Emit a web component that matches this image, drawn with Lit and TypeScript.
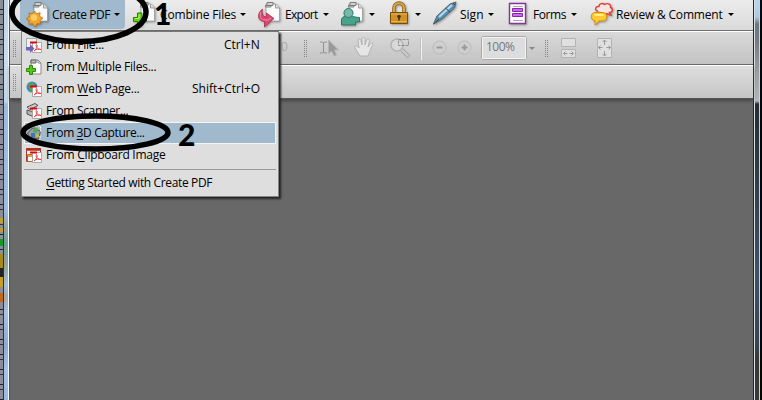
import { LitElement, html, css, svg, nothing } from 'lit';
import { customElement, property } from 'lit/decorators.js';

const page = svg`
  <path d="M8 4h9.500l4 4v13H8z" fill="#fafafa" stroke="#9a9a9a" stroke-width=".8"/>
  <path d="M17.500 4v4h4" fill="#ddd" stroke="#888" stroke-width=".8"/>
  <path d="M7.500 5.500V7H13V5.500zM9 2.500h6v3H9z" fill="#d0d0d0" stroke="#777" stroke-width=".9"/>`;

const icons: Record<string, unknown> = {
  create: svg`${page}<path d="M8.500 11l2.200 2.800 3.400-1-.5 3.500 3.400 2-3.100 2.100.8 3.600-3.600-.5-2.300 3.200-2.400-3.100-3.600.8.6-3.700L.3 18.500l3.200-2L3 13l3.400.9z" fill="#f4a52c" stroke="#b97110" stroke-width=".8"/><circle cx="8" cy="17.500" r="3.200" fill="#ffcb62"/>`,
  combine: svg`${page}<path d="M4.500 13h4.500v4.500h4.500v4H9V26H4.500v-4.500H.5v-4h4z" fill="#67d50f" stroke="#278000"/><path d="M6 14.500v4H2" fill="none" stroke="#b4f56b"/>`,
  export: svg`${page}<path d="M4.500 9c-6 5-5 12 2 12.500v5.500L16 18.500 8.500 13v4c-4 0-5-4-4-8z" fill="#dc4770" stroke="#a92850" stroke-width=".8"/><path d="M3 12c-2 5 0 8 4 8h3l3-2" fill="none" stroke="#f08fac"/>`,
  meeting: svg`${page}<path d="M.5 25v-5c0-2.500 2-3.500 4-3.500h7c2 0 3 1 7 1V22h-4v3z" fill="#4ba18c" stroke="#267866"/><circle cx="7.500" cy="13" r="4.500" fill="#76b9a9" stroke="#267866"/>`,
  secure: svg`<path d="M7 12V8c0-6.500 10-6.500 10 0v4" fill="none" stroke="#8a6425" stroke-width="3.600"/><path d="M7 12V8c0-6.500 10-6.500 10 0v4" fill="none" stroke="#d9a53f" stroke-width="2"/><path d="M3.500 12.500h17v11h-17z" fill="#cf9024" stroke="#7b4c09"/><path d="M4 14h16M4 21.500h16" stroke="#e6b34d"/><circle cx="12" cy="16.500" r="1.800" fill="#473313"/><path d="M12 16.500v4" stroke="#473313" stroke-width="1.600"/>`,
  sign: svg`<path d="M.5 24l3.500-8L17 4l6-2-1.500 6L9 19z" fill="#528fb7" stroke="#56636d"/><path d="M6 17L19 5" stroke="#b6dbef" stroke-width="2"/><path d="M12.500 8l4.500 4M.5 24l5.500-5M20 3l2 2" stroke="#444"/>`,
  forms: svg`<path d="M3.500 3.500h16v20h-16z" fill="#fff" stroke="#85349b" stroke-width="1.400"/><path d="M7 6.500h10M7 20.500h10" stroke="#aaa"/><path d="M6.500 8.500h10v3h-10zM6.500 13.500h10v3h-10z" fill="#c76bea" stroke="#8b24af"/>`,
  review: svg`<path d="M8 11c-4-1-2.500-5 1-4.500C9 3 13 3 14.500 4.500c3-2 7 0 6 3 3 1 2 5-1 5l1.500 2.500-5-1.500" fill="#f7e6e3" stroke="#df4037" stroke-width="1.400"/><path d="M5 12.500h8c5 0 5 8.500 0 8.500H9l-4 4v-4.200c-5-.8-5-7.500 0-8.300z" fill="#ffc832" stroke="#d88a0c"/><path d="M4.500 15h9" stroke="#ffef82" stroke-width="2"/>`,
};

const sheet = svg`<path d="M5 1h7l3 3v11H5z" fill="#fff" stroke="#888"/><path d="M12 1v3h3" fill="none" stroke="#888"/>`;
const pdf = svg`
  <path d="M6.500 5.500h9v10h-9z" fill="#fff" stroke="#999" stroke-width=".8"/>
  <path d="M4 5.500h7" stroke="#d00d0d" stroke-width="2"/>
  <path d="M8 14c3-2.500 4-5.500 2.500-6.500-1.500 1 1 5.500 4.500 5-2-1-5-.5-7 1.500" fill="none" stroke="#e33737" stroke-width=".9"/>`;

const smallIcons: Record<string, unknown> = {
  file: svg`<path d="M.5 1.500h10v12H.5z" fill="#eef0f8" stroke="#9aa"/>${pdf}<path d="M0 10h4V7l4.500 4.500L4 16v-3H0z" fill="#7561b5"/>`,
  multiple: svg`${sheet}<path d="M5 1h5v3H5z" fill="#bbb" stroke="#666"/><path d="M3.500 6.500h3v3h3v3h-3v3h-3v-3h-3v-3h3z" fill="#4bca16" stroke="#278000" stroke-width=".9"/>`,
  web: svg`<circle cx="6" cy="6" r="5.500" fill="#3b89c9"/><path d="M2 3l4-2 3 3-3 2 1 3-3 2z" fill="#52a548"/>${pdf}`,
  scanner: svg`<path d="M1 4l8-3.500 3 2-8 4z" fill="#ccc" stroke="#555"/><path d="M1 7l7 2v5L1 11z" fill="#b5b5b5" stroke="#555"/>${pdf}`,
  capture: svg`<path d="M1.500 8l5-5 8 3-2 8-9-2z" fill="#9a9fa3" stroke="#555"/><path d="M8 2l4 1-1 5-4-1z" fill="#53a957"/><path d="M5 8h4v4H5z" fill="#3878c0"/><path d="M10 9h3v3h-3z" fill="#c8b53c"/><path d="M9 1h5.500v6M4 15h10v-4" fill="none" stroke="#fff" stroke-dasharray="2 1"/>`,
  clipboard: svg`<path d="M.5 1.500h14v13H.5z" fill="#fff" stroke="#a33b2d"/><path d="M.5 2.500h14" stroke="#b82a20" stroke-width="2.500"/><path d="M1.500 7.500h5v7h-5z" fill="#fff" stroke="#b06a18"/><path d="M2 9h4" stroke="#e6a43b" stroke-width="2"/>${pdf}`,
};

interface ToolItem {
  icon: string;
  label?: string;
  iconX: number;
  textX?: number;
  textWidth?: number;
  arrowX: number;
}

const tools: ToolItem[] = [
  { icon: 'create', label: 'Create PDF', iconX: 26, textX: 52, textWidth: 58, arrowX: 114 },
  { icon: 'combine', label: 'Combine Files', iconX: 133, textX: 160, textWidth: 76, arrowX: 240 },
  { icon: 'export', label: 'Export', iconX: 258, textX: 285, textWidth: 33, arrowX: 323 },
  { icon: 'meeting', iconX: 341, arrowX: 369 },
  { icon: 'secure', iconX: 387, arrowX: 415 },
  { icon: 'sign', label: 'Sign', iconX: 433, textX: 460, textWidth: 23, arrowX: 488 },
  { icon: 'forms', label: 'Forms', iconX: 506, textX: 533, textWidth: 33, arrowX: 571 },
  { icon: 'review', label: 'Review & Comment', iconX: 590, textX: 616, textWidth: 107, arrowX: 728 },
];

// underlined mnemonic sits between the two halves of the label
const menuItems = [
  { icon: 'file', label: ['From ', 'F', 'ile...'], width: 58, shortcut: 'Ctrl+N', shortcutWidth: 36 },
  { icon: 'multiple', label: ['From ', 'M', 'ultiple Files...'], width: 110 },
  { icon: 'web', label: ['From ', 'W', 'eb Page...'], width: 93, shortcut: 'Shift+Ctrl+O', shortcutWidth: 68 },
  { icon: 'scanner', label: ['From ', 'S', 'canner...'], width: 82 },
  { icon: 'capture', label: ['From ', '3', 'D Capture...'], width: 99, active: true },
  { icon: 'clipboard', label: ['From ', 'C', 'lipboard Image'], width: 119 },
];

/** Text run whose letter spacing is adjusted to fill a given width. */
@customElement('fit-text')
export class FitText extends LitElement {
  static styles = css`
    :host { display: inline-block; white-space: pre; }
    .run { display: inline-block; }
    u { text-decoration-thickness: 1px; text-underline-offset: 2px; }
  `;

  @property({ attribute: false }) parts: string[] = [];
  @property({ type: Number }) width = 0;

  updated() {
    const run = this.renderRoot.querySelector<HTMLElement>('.run')!;
    this.style.width = `${this.width}px`;
    run.style.letterSpacing = '0px';
    const count = this.parts.join('').length;
    const natural = run.offsetWidth;
    run.style.letterSpacing = `${(this.width - natural) / count}px`;
  }

  render() {
    const [before, key = '', after = ''] = this.parts;
    return html`<span class="run">${before}${key ? html`<u>${key}</u>` : nothing}${after}</span>`;
  }
}

@customElement('app-root')
export class AppRoot extends LitElement {
  static styles = css`
    * { box-sizing: border-box; }
    :host {
      position: relative;
      display: flex;
      width: 762px;
      height: 400px;
      overflow: hidden;
      background: #686868;
      color: #000;
      font: 12px/16px 'Open Sans', 'Noto Sans', sans-serif;
    }
    svg { display: block; overflow: visible; }

    .left { display: flex; width: 10px; flex: none; }
    .desktop {
      width: 3px;
      background:
        linear-gradient(transparent 218px, #c79d22 218px 223px, transparent 223px 228px, #c79d22 228px 232px, transparent 232px 239px, #179a22 239px 246px, transparent 246px 254px, #a88a1b 254px 268px, #222 268px 277px, #c8a021 277px 287px, transparent 287px 293px, #c2681a 293px 302px, transparent 302px),
        repeating-linear-gradient(#8b8d98 0 9px, #202329 9px 10px, #8d909c 10px 14px, #30333b 14px 15px);
    }
    .glass {
      width: 6px;
      border-left: 1px solid #28323c;
      border-right: 1px solid #eff7ff;
      background: linear-gradient(#bfd3e6, #cbdcec 60px, #c0d5ea 101px, #9dbbdd 105px, #9dbde2 210px, #98a8a6 224px, #6e9f97 244px, #94a59c 266px, #a4bddb 285px, #a5a9aa 297px, #a6c2e5 312px, #8fabd0 345px, #a6c2e5 370px, #9db8da);
    }
    .edge { width: 1px; background: #4b5563; }
    .right { display: flex; width: 9px; flex: none; background: #050607; border-left: 1px solid #252525; }
    .right-glass {
      width: 6px;
      border-left: 1px solid #dce1e5;
      border-right: 1px solid #cbd2d7;
      background: linear-gradient(#b8d5ee, #acc9e2 17px, #6d7783 24px, #737a82 40px, #989da3 70px, #b3b7bd 101px, #252d36 104px, #34414f 200px, #41516b 270px, #384454 345px, #393734 360px, #3b3935);
    }

    .window { flex: 1; min-width: 0; }
    .bar { position: relative; display: flex; align-items: center; }
    .main { height: 31px; background: linear-gradient(#ececec, #dadada); border-bottom: 1px solid #6d6d6d; }
    .sub { height: 34px; background: linear-gradient(#d9d9d9, #c3c3c3); border-top: 1px solid #fff; border-bottom: 1px solid #6d6d6d; }
    .last { height: 34px; background: linear-gradient(#dedede, #c5c5c5); border-top: 1px solid #fff; border-bottom: 1px solid #555; box-shadow: 0 2px 3px #444; }
    .tools { display: grid; width: 744px; height: 30px; }
    .tool { grid-area: 1 / 1; display: flex; align-items: flex-start; justify-self: start; }
    .create { background: #a0b9cd; border-radius: 0 0 4px 4px; width: 105px; height: 29px; margin-left: 10px; grid-area: 1 / 1; }
    .tool-icon { width: 24px; height: 28px; filter: drop-shadow(1px 1px 1px #0005); }
    .tool fit-text { margin-top: 7px; }
    .arrow { width: 0; height: 0; margin-top: 13px; border: 3px solid transparent; border-top-color: #000; border-bottom: 0; }

    .menu { position: absolute; left: 21px; top: 31px; width: 258px; height: 166px; padding: 2px 2px 0; background: #dedede; border: 1px solid #858585; border-top-color: #777; box-shadow: 2px 2px 2px #222; }
    .menu-item { display: flex; align-items: center; height: 22px; padding-left: 1px; border: 1px solid transparent; }
    .menu-item.active { background: #a0b9cd; border-color: #f3f3f3; }
    .menu-icon { width: 16px; margin-right: 4px; }
    .shortcut { margin-left: auto; margin-right: 15px; }
    .rule { height: 1px; margin-top: 3px; background: #999; }
    .getting { padding: 5px 0 0 22px; }

    .callouts { position: absolute; inset: 0; }
    .number { position: absolute; font: 900 30px/24px Lato, 'Open Sans', sans-serif; }
    .one { left: 154px; top: 1px; }
    .two { left: 178px; top: 122px; }
  `;

  renderSubTools() {
    return html`
      <svg width="743" height="32" viewBox="10 32 743 32" fill="none" stroke="#aaa">
        <path d="M13.500 40v17M15.500 40v17M304.500 40v17M306.500 40v17M545.500 40v17M547.500 40v17" stroke="#858585" stroke-dasharray="1 1"/>
        <text x="281" y="51" font-size="12" fill="#aaa" stroke="none">0</text>
        <path d="M320 42h2.500l1 1 1-1h2.500M323.500 43v9M320 53h2.500l1-1 1 1h2.500" stroke="#8f8f8f"/>
        <path d="M328.500 40v14l3-3 2.500 5 2.500-1-2-5h4z" fill="#999" stroke="#b5b5b5"/>
        <path d="M360 56l-5-8c-1-3 2-3 4 0l-1-7c0-3 3-2 3 0l1 4v-6c0-2 3-2 3 0v6l1.500-5c1-2 3-1 3 1l-1.500 6 2-3c2-2 4 0 2 2l-4 10z" fill="#e6e6e6" stroke="#b3b3b3"/>
        <circle cx="397" cy="45" r="6" fill="#d9d9d9" stroke="#b3b3b3" stroke-width="1.500"/>
        <path d="M402 50l7 7" stroke="#a8a8a8" stroke-width="4"/><path d="M402 50l6.500 6.500" stroke="#ccc" stroke-width="2"/>
        <path d="M398.500 39.500h10v6h-10z" stroke="#8c8c8c" stroke-dasharray="3 1"/>
        <path d="M421.500 38v22" stroke="#f2f2f2"/><path d="M420.500 38v22" stroke="#c0c0c0"/>
        <circle cx="439.500" cy="47.500" r="6.500" fill="#cfcfcf" stroke="#bcbcbc"/><path d="M436.500 47.500h6" stroke="#9a9a9a" stroke-width="2"/>
        <circle cx="464.500" cy="47.500" r="6.500" fill="#cfcfcf" stroke="#bcbcbc"/><path d="M461.500 47.500h6M464.500 44.500v6" stroke="#9a9a9a" stroke-width="2"/>
        <rect x="482" y="37" width="44" height="22" rx="1" fill="#ddd" stroke="#f2f2f2" stroke-width="2"/><rect x="481.500" y="36.500" width="45" height="23" rx="1"/>
        <text x="486" y="51" font-size="12" fill="#777" stroke="none" textLength="29">100%</text>
        <path d="M529 47h6l-3 3z" fill="#888" stroke="none"/>
        <path d="M561.500 38.500h14v8h-14zM561.500 49.500h14v8h-14z" fill="#e0e0e0" stroke="#b3b3b3"/><path d="M563.500 53.500h4M569.500 53.500h4M565.500 51.500l-2 2 2 2M571.500 51.500l2 2-2 2" stroke="#999"/>
        <path d="M597.500 38.500h14v19h-14z" fill="#e0e0e0" stroke="#b3b3b3"/><path d="M604.500 40v5M602.500 42l2-2 2 2M604.500 51v5M602.500 54l2 2 2-2M598.500 47.500h4M600.500 45.500l-2 2 2 2M606.500 47.500h4M608.500 45.500l2 2-2 2" stroke="#999"/>
      </svg>`;
  }

  render() {
    return html`
      <div class="left"><div class="desktop"></div><div class="glass"></div><div class="edge"></div></div>
      <main class="window">
        <div class="bar main">
          <div class="tools">
            <div class="create"></div>
            ${tools.map((t) => html`
              <div class="tool" style="margin-left: ${t.iconX - 10}px">
                <svg class="tool-icon" viewBox="0 0 24 28">${icons[t.icon]}</svg>
                ${t.label ? html`<fit-text style="margin-left: ${t.textX! - t.iconX - 24}px" .parts=${[t.label]} .width=${t.textWidth!}></fit-text>` : nothing}
                <span class="arrow" style="margin-left: ${t.arrowX - (t.label ? t.textX! + t.textWidth! : t.iconX + 24)}px"></span>
              </div>`)}
          </div>
        </div>
        <div class="bar sub">${this.renderSubTools()}</div>
        <div class="bar last">
          <svg width="10" height="17"><path d="M3.500 0v17M5.500 0v17" stroke="#858585" stroke-dasharray="1 1"/></svg>
        </div>
      </main>
      <div class="right"><div class="right-glass"></div></div>
      <nav class="menu">
        ${menuItems.map((m) => html`
          <div class="menu-item ${m.active ? 'active' : ''}">
            <svg class="menu-icon" height="16" viewBox="0 0 16 16">${smallIcons[m.icon]}</svg>
            <fit-text .parts=${m.label} .width=${m.width}></fit-text>
            ${m.shortcut ? html`<fit-text class="shortcut" .parts=${[m.shortcut]} .width=${m.shortcutWidth}></fit-text>` : nothing}
          </div>`)}
        <div class="rule"></div>
        <div class="getting"><fit-text .parts=${['', 'G', 'etting Started with Create PDF']} .width=${166}></fit-text></div>
      </nav>
      <svg class="callouts" width="762" height="400" fill="none" stroke="#000" stroke-width="5.500">
        <ellipse cx="79" cy="12" rx="67" ry="29.500"/>
        <ellipse cx="95.500" cy="132.500" rx="72.500" ry="16.500"/>
      </svg>
      <span class="number one">1</span>
      <span class="number two">2</span>
    `;
  }
}

declare global {
  interface HTMLElementTagNameMap {
    'app-root': AppRoot;
    'fit-text': FitText;
  }
}
